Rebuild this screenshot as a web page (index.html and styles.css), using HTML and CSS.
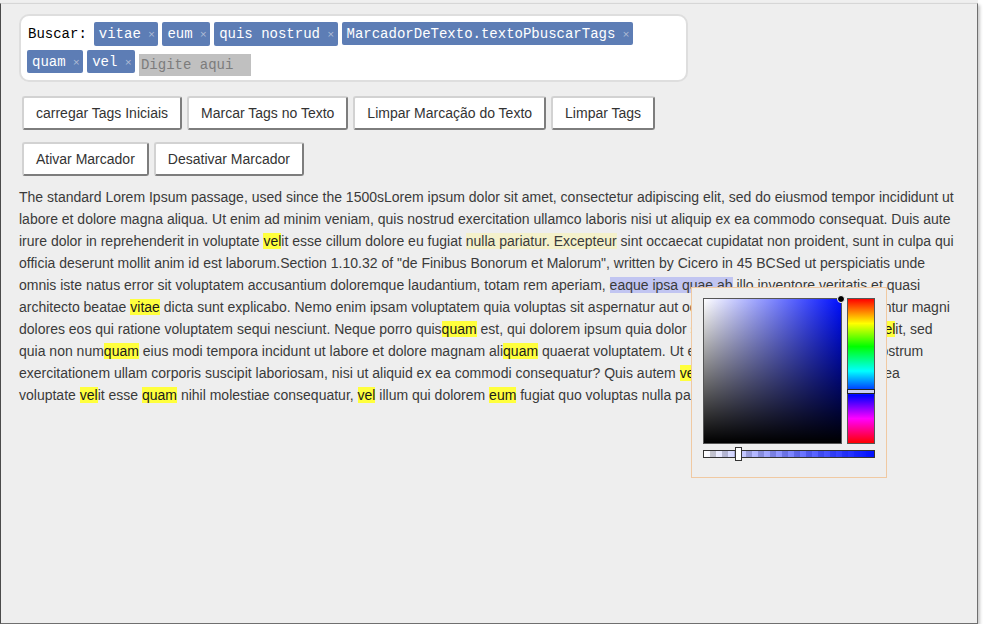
FILE: index.html
```html
<!DOCTYPE html>
<html lang="pt">
<head>
<meta charset="utf-8">
<title>Marcador de Texto</title>
<link rel="stylesheet" href="styles.css">
</head>
<body>
<div class="topstrip"></div>
<div class="window">
  <div class="tagbox">
    <span class="label">Buscar:</span>
    <span class="tag">vitae<span class="x">×</span></span>
    <span class="tag">eum<span class="x">×</span></span>
    <span class="tag">quis nostrud<span class="x">×</span></span>
    <span class="tag">MarcadorDeTexto.textoPbuscarTags<span class="x">×</span></span>
    <span class="tag">quam<span class="x">×</span></span>
    <span class="tag">vel<span class="x">×</span></span>
    <input class="taginput" type="text" placeholder="Digite aqui">
  </div>

  <div class="btnrow">
    <button class="btn">carregar Tags Iniciais</button>
    <button class="btn">Marcar Tags no Texto</button>
    <button class="btn">Limpar Marcação do Texto</button>
    <button class="btn">Limpar Tags</button>
  </div>
  <div class="btnrow">
    <button class="btn">Ativar Marcador</button>
    <button class="btn">Desativar Marcador</button>
  </div>

  <p class="texto">The standard Lorem Ipsum passage, used since the 1500sLorem ipsum dolor sit amet, consectetur adipiscing elit, sed do eiusmod tempor incididunt ut labore et dolore magna aliqua. Ut enim ad minim veniam, quis nostrud exercitation ullamco laboris nisi ut aliquip ex ea commodo consequat. Duis aute irure dolor in reprehenderit in voluptate <mark class="hl">vel</mark>it esse cillum dolore eu fugiat <span class="hl-pale">nulla pariatur. Excepteur</span> sint occaecat cupidatat non proident, sunt in culpa qui officia deserunt mollit anim id est laborum.Section 1.10.32 of "de Finibus Bonorum et Malorum", written by Cicero in 45 BCSed ut perspiciatis unde omnis iste natus error sit voluptatem accusantium doloremque laudantium, totam rem aperiam, <span class="hl-blue">eaque ipsa quae ab</span> illo inventore veritatis et quasi architecto beatae <mark class="hl">vitae</mark> dicta sunt explicabo. Nemo enim ipsam voluptatem quia voluptas sit aspernatur aut odit aut fugit, sed quia consequuntur magni dolores eos qui ratione voluptatem sequi nesciunt. Neque porro quis<mark class="hl">quam</mark> est, qui dolorem ipsum quia dolor sit amet, consectetur, adipisci <mark class="hl">vel</mark>it, sed quia non num<mark class="hl">quam</mark> eius modi tempora incidunt ut labore et dolore magnam ali<mark class="hl">quam</mark> quaerat voluptatem. Ut enim ad minima veniam, quis nostrum exercitationem ullam corporis suscipit laboriosam, nisi ut aliquid ex ea commodi consequatur? Quis autem <mark class="hl">vel</mark> <mark class="hl">eum</mark> iure reprehenderit qui in ea voluptate <mark class="hl">vel</mark>it esse <mark class="hl">quam</mark> nihil molestiae consequatur, <mark class="hl">vel</mark> illum qui dolorem <mark class="hl">eum</mark> fugiat quo voluptas nulla pariatur?</p>

  <div class="picker">
    <div class="picker-top">
      <div class="sat"><span class="sat-dot"></span></div>
      <div class="hue"><span class="hue-handle"></span></div>
    </div>
    <div class="alpha"><span class="alpha-handle"></span></div>
  </div>
</div>
</body>
</html>
```
FILE: styles.css
```css
html, body {
  margin: 0;
  padding: 0;
  background: #ffffff;
}

.topstrip {
  width: 978px;
  height: 3px;
  background: #efefef;
}

.window {
  position: relative;
  box-sizing: border-box;
  width: 978px;
  height: 621px;
  background: #eeeeee;
  border-top: 1px solid #d6d6d6;
  border-left: 1px solid #4a4a4a;
  border-right: 1px solid #6f6f6f;
  border-bottom: 1px solid #6f6f6f;
  box-shadow: 2px 2px 3px rgba(0, 0, 0, 0.22);
  padding: 10px 18px 0 18px;
  font-family: "Liberation Sans", Arial, sans-serif;
}

/* tag box */
.tagbox {
  box-sizing: border-box;
  width: 669px;
  height: 68px;
  background: #ffffff;
  border: 2px solid #dedede;
  border-radius: 10px;
  padding: 6px 8px 0 6px;
  display: flex;
  flex-wrap: wrap;
  align-content: flex-start;
  align-items: flex-start;
  column-gap: 4px;
  row-gap: 4px;
  font-family: "Liberation Mono", "Courier New", monospace;
  font-size: 14px;
}

.label {
  line-height: 24px;
  color: #000;
  margin: 0 3px 0 1px;
}

.tag {
  display: inline-flex;
  align-items: center;
  height: 24px;
  line-height: 24px;
  background: #5d7db5;
  color: #ffffff;
  border-radius: 2px;
  padding: 0 3px 0 5px;
}

.tag:nth-of-type(n+5) {
  height: 23px;
}

.x {
  font-family: "DejaVu Sans", sans-serif;
  font-size: 9px;
  color: #b2bdd6;
  margin-left: 7px;
}

.taginput {
  box-sizing: border-box;
  width: 112px;
  height: 22px;
  margin: 4px 0 0 0;
  padding: 0 2px;
  border: none;
  outline: none;
  background: #c0c0c0;
  font-family: "Liberation Mono", "Courier New", monospace;
  font-size: 14px;
}

.taginput::placeholder {
  color: #7c7c7c;
}

/* buttons */
.btnrow {
  display: flex;
  gap: 5px;
  padding-left: 3px;
  margin-top: 14px;
}

.btnrow + .btnrow {
  margin-top: 12px;
}

.btn {
  box-sizing: border-box;
  height: 34px;
  padding: 0 12px;
  background: #ffffff;
  border: 2px solid;
  border-color: #d2d2d2 #7d7d7d #7d7d7d #d2d2d2;
  border-radius: 3px;
  font-family: "Liberation Sans", Arial, sans-serif;
  font-size: 14px;
  color: #333333;
}

/* text */
.texto {
  width: 940px;
  margin: 10px 0 0 0;
  font-size: 14px;
  line-height: 22px;
  color: #3a3a3a;
}

.hl {
  background: #ffff3d;
  color: #1a1a1a;
}

.hl-pale {
  background: #f4f1cb;
}

.hl-blue {
  background: #c1c5f1;
}

/* color picker */
.picker {
  position: absolute;
  left: 690px;
  top: 283px;
  box-sizing: border-box;
  width: 196px;
  height: 191px;
  background: #eeeeee;
  border: 1px solid #f0c9a2;
  padding: 10px 11px 0 11px;
}

.picker-top {
  display: flex;
  gap: 5px;
}

.sat {
  position: relative;
  box-sizing: border-box;
  width: 139px;
  height: 146px;
  border: 1px solid #555;
  background:
    linear-gradient(to bottom, rgba(0, 0, 0, 0), #000000),
    linear-gradient(to right, #ffffff, #0010ff);
}

.sat-dot {
  position: absolute;
  right: -4px;
  top: -4px;
  width: 6px;
  height: 6px;
  border-radius: 50%;
  background: #000;
  border: 1px solid #fff;
}

.hue {
  position: relative;
  box-sizing: border-box;
  width: 28px;
  height: 146px;
  border: 1px solid #555;
  background: linear-gradient(to bottom,
    #ff0000 0%, #ffff00 17%, #00ff00 33%, #00ffff 50%,
    #0000ff 67%, #ff00ff 83%, #ff0000 100%);
}

.hue-handle {
  position: absolute;
  left: -1px;
  right: -1px;
  top: 90px;
  height: 3px;
  background: #c8cef2;
  border: 1px solid #222;
}

.alpha {
  position: relative;
  box-sizing: border-box;
  width: 172px;
  height: 8px;
  margin-top: 6px;
  border: 1px solid #333;
  background:
    linear-gradient(to right, rgba(0, 16, 255, 0), #0010ff),
    conic-gradient(#cccccc 25%, #ffffff 0 50%, #cccccc 0 75%, #ffffff 0) 0 0 / 12px 12px;
}

.alpha-handle {
  position: absolute;
  left: 31px;
  top: -4px;
  box-sizing: border-box;
  width: 7px;
  height: 14px;
  background: #ffffff;
  border: 1px solid #333;
}
```
